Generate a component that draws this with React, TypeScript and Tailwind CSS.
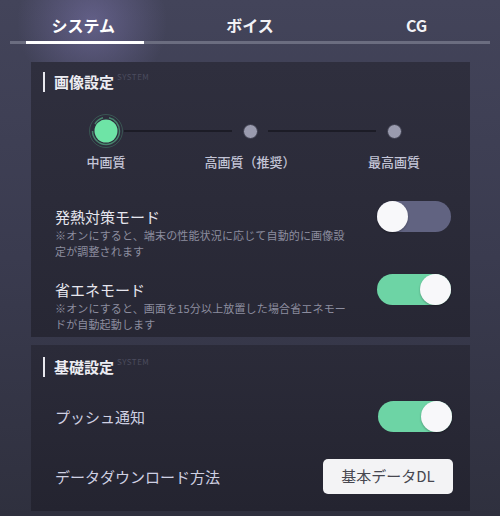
import React from "react";

const font = { fontFamily: '"Noto Sans CJK JP", "Noto Sans", sans-serif' };

function Toggle({ on }: { on: boolean }) {
  return (
    <div
      className={`flex h-[31px] w-[74px] shrink-0 rounded-full ${on ? "justify-end bg-[#6dd4a5]" : "justify-start bg-[#616381]"}`}
    >
      <div className="h-[31px] w-[31px] rounded-full bg-[#f8f8fa] shadow-[0_1px_2px_rgba(0,0,0,0.3)]" />
    </div>
  );
}

function SectionTitle({ title }: { title: string }) {
  return (
    <div className="flex h-[20px] items-center pl-[12px]">
      <div className="h-[20px] w-[2px] bg-[#e8e8ee]" />
      <div className="ml-[9px] text-[15px] font-bold leading-[20px] text-[#ececf2]">{title}</div>
      <div className="ml-[3px] self-start text-[8px] leading-[10px] tracking-[0.5px] text-[#4b4c5e]">SYSTEM</div>
    </div>
  );
}

function Dot({ active }: { active?: boolean }) {
  return (
    <div className="flex h-[36px] w-[36px] shrink-0 items-center justify-center">
      {active ? (
        <svg width="36" height="36" viewBox="0 0 36 36">
          <circle cx="18" cy="18" r="16.5" fill="none" stroke="#4fa07e" strokeOpacity="0.35" strokeWidth="1" />
          <path d="M 7 11 A 13.5 13.5 0 0 1 15 4.8" fill="none" stroke="#5ac08f" strokeOpacity="0.6" strokeWidth="1.5" />
          <path d="M 21 4.8 A 13.5 13.5 0 0 1 31.5 18 A 13.5 13.5 0 0 1 18 31.5 A 13.5 13.5 0 0 1 4.5 18" fill="none" stroke="#5ac08f" strokeOpacity="0.6" strokeWidth="1.5" />
          <circle cx="18" cy="18" r="11.5" fill="#6ee4a6" />
        </svg>
      ) : (
        <div className="h-[15px] w-[15px] rounded-full border border-[#3a3b4a] bg-[#9a9bae]" />
      )}
    </div>
  );
}

export default function App() {
  return (
    <div
      style={font}
      className="h-[516px] w-[500px] overflow-hidden bg-[radial-gradient(circle_at_92px_22px,rgba(150,140,210,0.38),rgba(150,140,210,0)_75px),linear-gradient(180deg,#43445a_0%,#3a3b4f_50%,#2f303e_100%)]"
    >
      {/* Tabs */}
      <div className="grid h-[41px] grid-cols-3 pt-[12px]">
        <div className="text-center text-[16px] font-bold leading-[26px] text-white">システム</div>
        <div className="text-center text-[16px] font-bold leading-[26px] text-[#f2f2f6]">ボイス</div>
        <div className="text-center text-[16px] font-bold leading-[26px] text-[#f2f2f6]">CG</div>
      </div>
      <div className="mx-[10px] h-[3px] bg-[#6b6d80]">
        <div className="ml-[16px] h-[3px] w-[118px] bg-white" />
      </div>

      {/* Panel 1 */}
      <div className="mx-[31px] mt-[18px] w-[439px] bg-[linear-gradient(180deg,#2f2f3e,#272734)] pb-[5px] pt-[10px]">
        <SectionTitle title="画像設定" />

        <div className="ml-[57px] mt-[21px] flex h-[36px] w-[324px] items-center">
          <Dot active />
          <div className="h-[2px] flex-1 bg-[#1c1c26]" />
          <Dot />
          <div className="h-[2px] flex-1 bg-[#1c1c26]" />
          <Dot />
        </div>
        <div className="ml-[25px] mt-[4px] flex w-[388px] justify-between">
          <div className="w-[100px] text-center text-[13px] font-medium leading-[18px] text-[#c3c4d6]">中画質</div>
          <div className="w-[100px] text-center text-[13px] font-medium leading-[18px] text-[#c3c4d6]">高画質（推奨）</div>
          <div className="w-[100px] text-center text-[13px] font-medium leading-[18px] text-[#c3c4d6]">最高画質</div>
        </div>

        <div className="mt-[30px] flex items-start pl-[24px] pr-[19px]">
          <div className="flex-1 pt-[6px]">
            <div className="text-[15px] font-normal leading-[20px] text-[#e6e6ee]">発熱対策モード</div>
            <div className="text-[11px] leading-[16px] tracking-[0.15px] text-[#8c8d9f]">
              ※オンにすると、端末の性能状況に応じて自動的に画像設
              <br />
              定が調整されます
            </div>
          </div>
          <Toggle on={false} />
        </div>

        <div className="mt-[15px] flex items-start pl-[24px] pr-[19px]">
          <div className="flex-1 pt-[6px]">
            <div className="text-[15px] font-normal leading-[20px] text-[#e6e6ee]">省エネモード</div>
            <div className="text-[11px] leading-[16px] tracking-[0.15px] text-[#8c8d9f]">
              ※オンにすると、画面を15分以上放置した場合省エネモー
              <br />
              ドが自動起動します
            </div>
          </div>
          <Toggle on={true} />
        </div>
      </div>

      {/* Panel 2 */}
      <div className="mx-[31px] mt-[8px] w-[439px] bg-[linear-gradient(180deg,#2b2b39,#242430)] pb-[17px] pt-[12px]">
        <SectionTitle title="基礎設定" />

        <div className="mt-[24px] flex h-[31px] items-center pl-[24px] pr-[18px]">
          <div className="flex-1 text-[15px] font-normal leading-[20px] text-[#cfd0e2]">プッシュ通知</div>
          <Toggle on={true} />
        </div>

        <div className="mt-[27px] flex h-[35px] items-center pl-[24px] pr-[17px]">
          <div className="flex-1 text-[15px] font-normal leading-[20px] text-[#cfd0e2]">データダウンロード方法</div>
          <div className="flex h-[35px] w-[130px] items-center justify-center rounded-[5px] bg-[#f3f3f5] text-[15px] font-normal text-[#474750]">
            基本データDL
          </div>
        </div>
      </div>
    </div>
  );
}
